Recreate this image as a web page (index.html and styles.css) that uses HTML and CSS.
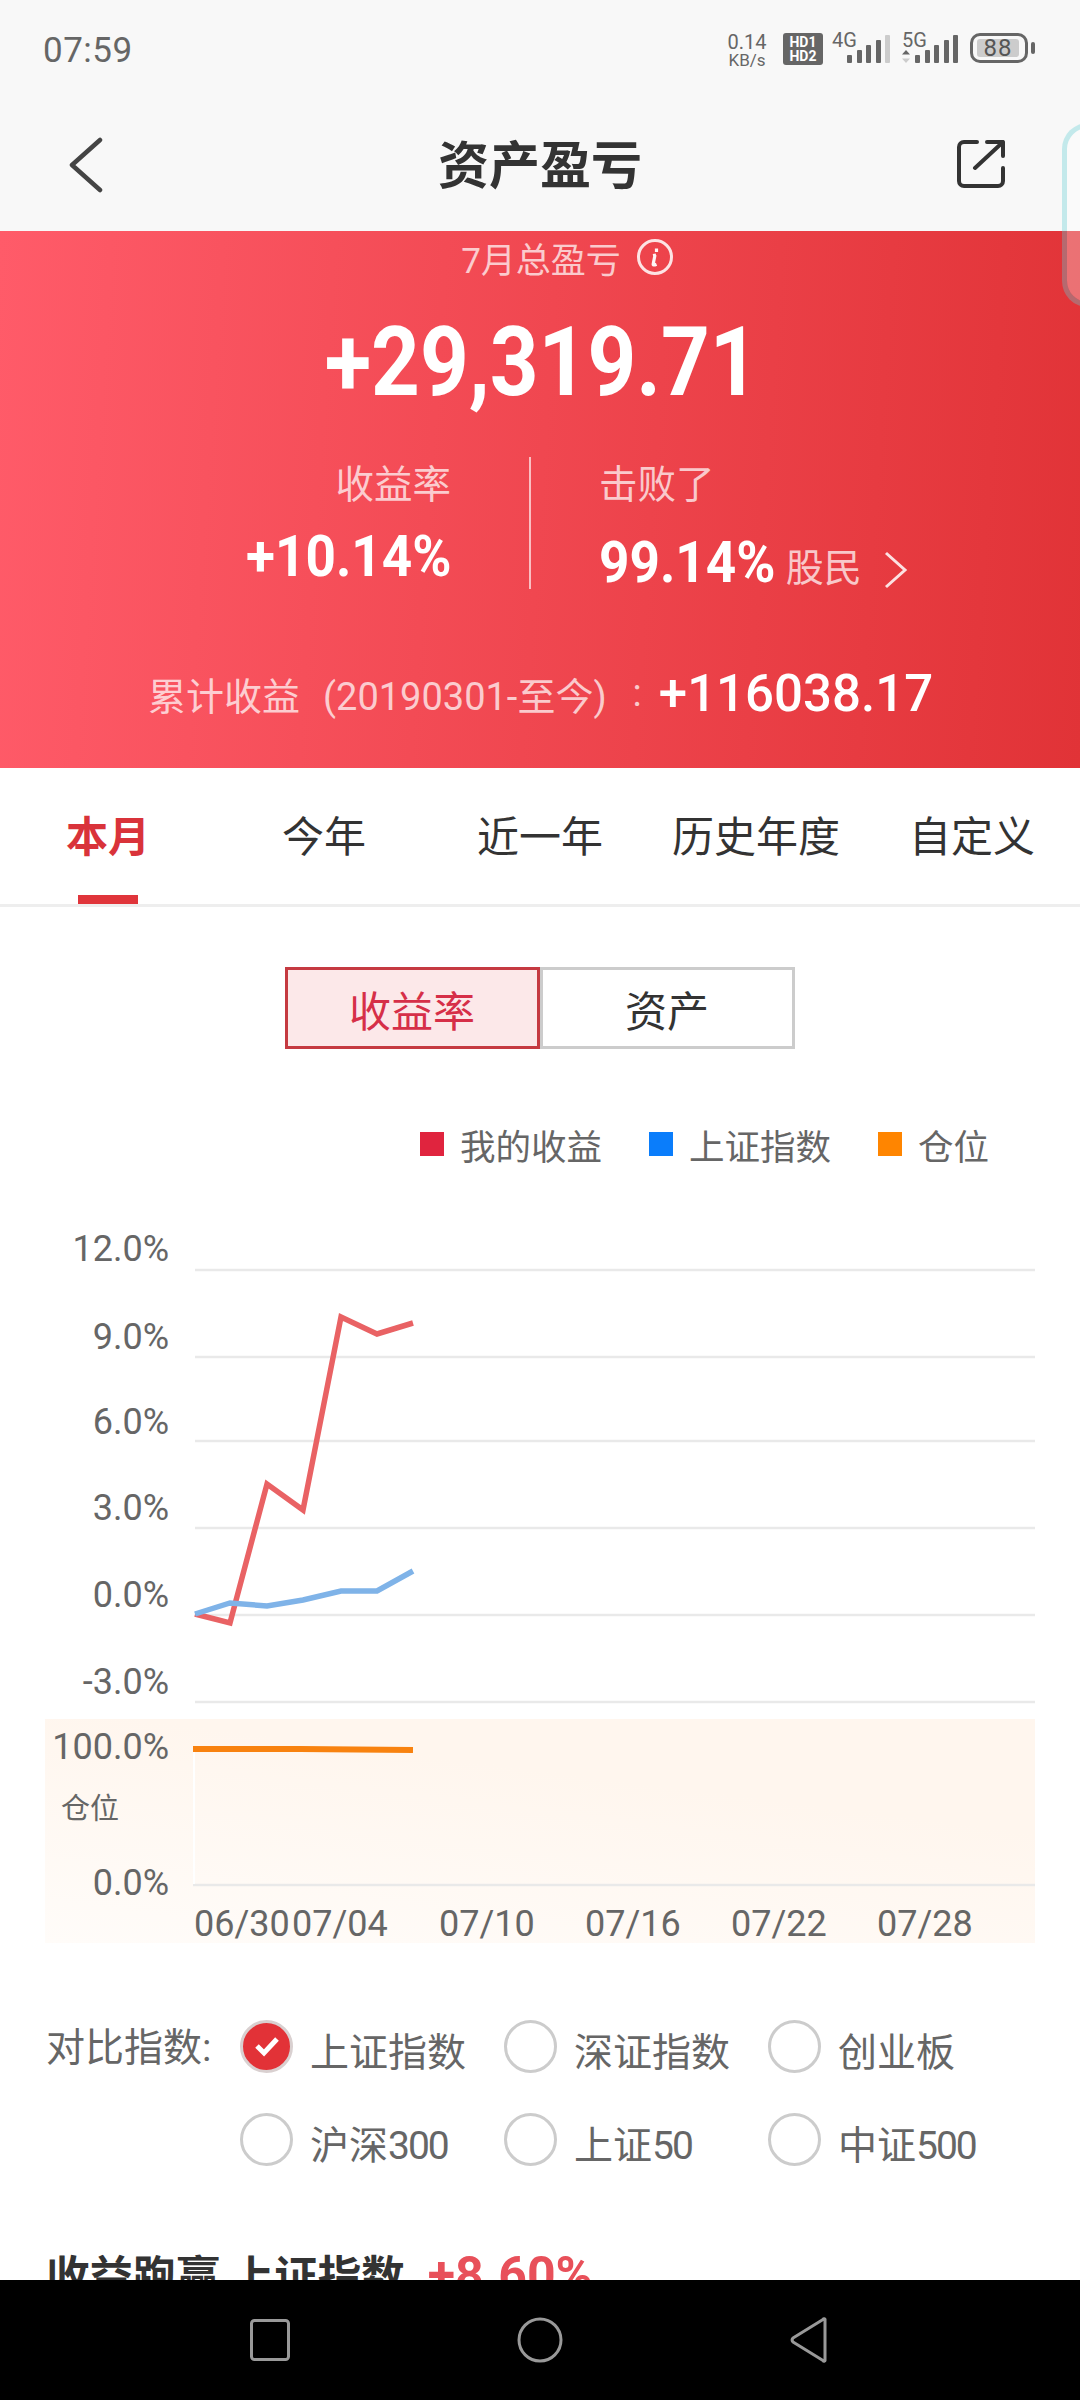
FILE: index.html
```html
<!DOCTYPE html>
<html lang="zh-CN">
<head>
    <meta charset="UTF-8">
    <meta name="viewport" content="width=device-width, initial-scale=1.0">
    <title>资产盈亏</title>
    <link rel="stylesheet" href="styles.css">
</head>
<body>
<div class="screen">
    <div class="float-tab"></div>

    <div class="topbar">
        <div class="status">
            <span class="time">07:59</span>
            <div class="status-icons">
                <div class="speed"><span class="speed-num">0.14</span><span>KB/s</span></div>
                <div class="hd"><span>HD1</span><span>HD2</span></div>
                <div class="net net-4g">
                    <span class="net-label">4G</span>
                    <div class="bars">
                        <i class="b1"></i><i class="b2"></i><i class="b3"></i><i class="b4"></i><i class="b5 off"></i>
                    </div>
                </div>
                <div class="net net-5g">
                    <span class="net-label">5G</span>
                    <svg class="updown" width="8" height="13" viewBox="0 0 8 13"><path d="M4 0l4 4.500H0z" fill="#666"/><path d="M4 13l4-4.500H0z" fill="#ccc"/></svg>
                    <div class="bars">
                        <i class="b1"></i><i class="b2"></i><i class="b3"></i><i class="b4"></i><i class="b5"></i>
                    </div>
                </div>
                <div class="battery">
                    <div class="battery-body"><span>88</span></div>
                    <div class="battery-cap"></div>
                </div>
            </div>
        </div>
        <div class="nav">
            <svg class="back" width="34" height="56" viewBox="0 0 34 56"><path d="M31 3L3 28l28 25" fill="none" stroke="#444" stroke-width="4.500" stroke-linecap="round" stroke-linejoin="round"/></svg>
            <h1>资产盈亏</h1>
            <svg class="share" width="48" height="48" viewBox="0 0 48 48"><path d="M20 2H7a5 5 0 0 0-5 5v34a5 5 0 0 0 5 5h34a5 5 0 0 0 5-5V28M18 28L46 2M30 2h16v14" fill="none" stroke="#333" stroke-width="4" stroke-linecap="round" stroke-linejoin="round"/></svg>
        </div>
    </div>

    <div class="hero">
        <div class="hero-title">
            <span>7月总盈亏</span>
            <svg width="36" height="36" viewBox="0 0 36 36"><circle cx="18" cy="18" r="16.500" fill="none" stroke="#fff" stroke-opacity=".85" stroke-width="3"/><path d="M19.500 9.500v3.500M19 16l-3 .500M18 16l-1.800 9c-.2 1 .6 1.500 3.300.3" fill="none" stroke="#fff" stroke-opacity=".95" stroke-width="3.200"/></svg>
        </div>
        <div class="hero-total"><span>+29,319.71</span></div>
        <div class="hero-split">
            <div class="hero-col left">
                <div class="hero-label">收益率</div>
                <div class="hero-value"><span class="num">+10.14%</span></div>
            </div>
            <div class="hero-col right">
                <div class="hero-label">击败了</div>
                <div class="hero-value"><span class="num">99.14%</span><span class="unit">股民</span>
                    <svg class="more" width="24" height="38" viewBox="0 0 24 38"><path d="M2 2l19 17L2 36" fill="none" stroke="#fff" stroke-opacity=".85" stroke-width="3"/></svg>
                </div>
            </div>
        </div>
        <div class="hero-sum">
            <span class="sum-label">累计收益</span>
            <span class="sum-label sum-range">(20190301-至今)</span>
            <span class="sum-label sum-colon">:</span>
            <span class="sum-value">+116038.17</span>
        </div>
    </div>

    <div class="tabs">
        <div class="tab active">本月</div>
        <div class="tab">今年</div>
        <div class="tab">近一年</div>
        <div class="tab">历史年度</div>
        <div class="tab">自定义</div>
    </div>

    <div class="content">
        <div class="toggle">
            <div class="toggle-item on">收益率</div>
            <div class="toggle-item">资产</div>
        </div>

        <div class="legend">
            <div class="legend-item"><i class="sq red"></i>我的收益</div>
            <div class="legend-item"><i class="sq blue"></i>上证指数</div>
            <div class="legend-item"><i class="sq orange"></i>仓位</div>
        </div>

        <svg class="chart" width="1080" height="730" viewBox="0 1220 1080 730">
            <defs>
                <linearGradient id="posfade" x1="0" y1="1" x2="0.45" y2="0.2">
                    <stop offset="0" stop-color="#fffcf9"/>
                    <stop offset="1" stop-color="#fff6ee"/>
                </linearGradient>
            </defs>
            <rect x="45" y="1719" width="990" height="224" fill="url(#posfade)"/>
            <g class="grid">
                <line x1="195" y1="1270" x2="1035" y2="1270"/>
                <line x1="195" y1="1357" x2="1035" y2="1357"/>
                <line x1="195" y1="1441" x2="1035" y2="1441"/>
                <line x1="195" y1="1528" x2="1035" y2="1528"/>
                <line x1="195" y1="1615" x2="1035" y2="1615"/>
                <line x1="195" y1="1702" x2="1035" y2="1702"/>
                <line x1="193" y1="1885" x2="1035" y2="1885"/>
            </g>
            <line x1="194" y1="1752" x2="194" y2="1884" stroke="#fff" stroke-width="2"/>
            <g class="axis">
                <text x="169" y="1261">12.0%</text>
                <text x="169" y="1349">9.0%</text>
                <text x="169" y="1434">6.0%</text>
                <text x="169" y="1520">3.0%</text>
                <text x="169" y="1607">0.0%</text>
                <text x="169" y="1694">-3.0%</text>
                <text x="169" y="1759">100.0%</text>
                <text x="169" y="1895">0.0%</text>
            </g>
            <text class="pos-name" x="61" y="1819">仓位</text>
            <g class="dates">
                <text x="194" y="1936">06/30</text>
                <text x="292" y="1936">07/04</text>
                <text x="439" y="1936">07/10</text>
                <text x="585" y="1936">07/16</text>
                <text x="731" y="1936">07/22</text>
                <text x="877" y="1936">07/28</text>
            </g>
            <polyline class="line l-red" points="195,1614 230,1623 267,1484 303,1510 341,1317 377,1334 413,1323"/>
            <polyline class="line l-blue" points="195,1614 230,1603 267,1606 303,1600 341,1591 377,1591 413,1571"/>
            <polyline class="line l-orange" points="193,1749 300,1749 413,1750"/>
        </svg>

        <div class="compare">
            <div class="compare-label">对比指数:</div>
            <div class="options">
                <div class="option"><span class="radio checked"><svg width="26" height="22" viewBox="0 0 26 22"><path d="M3 11l7 7L23 4" fill="none" stroke="#fff" stroke-width="5"/></svg></span><span class="opt-text">上证指数</span></div>
                <div class="option"><span class="radio"></span><span class="opt-text">深证指数</span></div>
                <div class="option"><span class="radio"></span><span class="opt-text">创业板</span></div>
                <div class="option"><span class="radio"></span><span class="opt-text">沪深<span class="digits">300</span></span></div>
                <div class="option"><span class="radio"></span><span class="opt-text">上证<span class="digits">50</span></span></div>
                <div class="option"><span class="radio"></span><span class="opt-text">中证<span class="digits">500</span></span></div>
            </div>
        </div>

        <div class="beat"><b>收益跑赢 上证指数</b><span class="beat-num">+8.60%</span></div>
    </div>

    <div class="softkeys">
        <svg width="40" height="42" viewBox="0 0 40 42"><rect x="1.500" y="1.500" width="37" height="39" rx="3" fill="none" stroke="#999" stroke-width="3"/></svg>
        <svg width="46" height="46" viewBox="0 0 46 46"><circle cx="23" cy="23" r="21" fill="none" stroke="#999" stroke-width="3"/></svg>
        <svg width="38" height="46" viewBox="0 0 38 46"><path d="M35 3v40a1 1 0 0 1-2 .5L3 25a3 3 0 0 1 0-4L33 2.500a1 1 0 0 1 2 .5z" fill="none" stroke="#999" stroke-width="3" stroke-linejoin="round"/></svg>
    </div>
</div>
</body>
</html>
```

FILE: styles.css
```css
* {
    box-sizing: border-box;
}

body {
    margin: 0;
    padding: 0;
    background: #fff;
    font-family: Roboto, "Noto Sans CJK SC", sans-serif;
    color: #333;
}

.screen {
    position: relative;
    width: 1080px;
    height: 2400px;
    overflow: hidden;
    display: flex;
    flex-direction: column;
}

/* floating side handle that sits over the header */
.float-tab {
    position: absolute;
    left: 1062px;
    top: 123px;
    width: 40px;
    height: 184px;
    border: 5px solid rgba(97, 206, 211, 0.35);
    border-radius: 26px 0 0 26px;
    background: rgba(255, 255, 255, 0.3);
    background-clip: padding-box;
    z-index: 5;
}

.topbar {
    height: 231px;
    background: #f8f8f8;
    flex: none;
}

.status {
    height: 100px;
    padding: 0 45px 0 43px;
    display: flex;
    align-items: center;
    justify-content: space-between;
    color: #666;
}

.time {
    font-size: 35px;
    letter-spacing: 0.5px;
}

.status-icons {
    display: flex;
    align-items: flex-start;
    height: 32px;
    margin-top: -2px;
}

.speed {
    display: flex;
    flex-direction: column;
    align-items: center;
    font-size: 17px;
    line-height: 18px;
    width: 40px;
    margin-right: 16px;
}

.speed-num {
    font-size: 20px;
}

.hd {
    width: 40px;
    height: 32px;
    background: #666;
    color: #fff;
    border-radius: 3px;
    font-size: 14px;
    font-weight: 700;
    line-height: 14px;
    display: flex;
    flex-direction: column;
    align-items: center;
    justify-content: center;
    margin-right: 9px;
}

.net {
    position: relative;
    height: 30px;
    margin-right: 12px;
}

.net-4g {
    width: 58px;
}

.net-5g {
    width: 56px;
}

.net-label {
    position: absolute;
    left: 0;
    top: -3px;
    font-size: 20px;
    line-height: 20px;
}

.updown {
    position: absolute;
    left: 0;
    bottom: 0;
}

.bars {
    position: absolute;
    right: 0;
    bottom: 0;
    display: flex;
    align-items: flex-end;
    gap: 4.500px;
}

.bars i {
    display: block;
    width: 5px;
    background: #666;
    border-radius: 1px;
}

.bars .b1 { height: 8px; }
.bars .b2 { height: 13px; }
.bars .b3 { height: 18px; }
.bars .b4 { height: 23px; }
.bars .b5 { height: 28px; }
.bars .off { background: #ccc; }

.battery {
    display: flex;
    align-items: center;
    height: 30px;
}

.battery-body {
    width: 58px;
    height: 30px;
    border: 3px solid #666;
    border-radius: 10px;
    padding: 3px 4px;
}

.battery-body span {
    display: block;
    width: 42px;
    height: 18px;
    background: #ccc;
    border-radius: 3px;
    font-size: 24px;
    line-height: 18px;
    text-align: center;
    color: #555;
    letter-spacing: 1px;
}

.battery-cap {
    width: 4px;
    height: 12px;
    margin-left: 3px;
    background: #666;
    border-radius: 2px;
}

.nav {
    height: 131px;
    padding: 3px 75px 0 75px;
    display: grid;
    grid-template-columns: 1fr auto 1fr;
    align-items: center;
}

.nav h1 {
    margin: 0;
    font-size: 51px;
    line-height: 68px;
    font-weight: 700;
    color: #333;
}

.back {
    margin-left: -6px;
    margin-top: -4px;
}

.share {
    justify-self: end;
    margin-top: -6px;
}

.hero {
    height: 537px;
    flex: none;
    background: linear-gradient(94deg, #ff5b69 0%, #e13337 100%);
    color: #fff;
    position: relative;
}

.hero-title {
    height: 52px;
    padding-left: 54px;
    display: flex;
    align-items: center;
    justify-content: center;
    gap: 16px;
    font-size: 35px;
    color: rgba(255, 255, 255, 0.72);
}

.hero-total {
    text-align: center;
    font-size: 96px;
    line-height: 112px;
    font-weight: 700;
    margin-top: 23px;
    padding-left: 3px;
}

/* no condensed font here, so the figures are squeezed */
.hero-total span {
    display: inline-block;
    transform: scaleX(0.887);
}

.hero-split {
    display: flex;
    height: 132px;
    margin-top: 39px;
}

.hero-col {
    display: flex;
    flex-direction: column;
}

.hero-col.left {
    width: 531px;
    align-items: flex-end;
    padding-right: 78px;
    border-right: 2px solid rgba(255, 255, 255, 0.65);
}

.hero-col.right {
    padding-left: 68px;
}

.hero-label {
    font-size: 38.500px;
    line-height: 56px;
    color: rgba(255, 255, 255, 0.72);
}

.hero-value {
    font-size: 58px;
    line-height: 66px;
    font-weight: 700;
    margin-top: 10px;
    display: flex;
    align-items: center;
}

.num {
    display: inline-block;
    transform: scaleX(0.915);
}

.left .num {
    transform-origin: right center;
}

.right .num {
    transform-origin: left center;
    margin-right: -16px;
}

.unit {
    font-size: 38px;
    font-weight: 400;
    color: rgba(255, 255, 255, 0.72);
    margin-left: 10px;
    padding-top: 12px;
}

.more {
    margin-left: 22px;
    margin-top: 16px;
}

.hero-sum {
    margin-top: 74px;
    padding-left: 148px;
    display: flex;
    align-items: center;
    height: 60px;
}

.sum-label {
    font-size: 38px;
    color: rgba(255, 255, 255, 0.72);
}

.sum-range {
    margin-left: 23px;
}

.sum-colon {
    margin-left: 26px;
}

.sum-value {
    font-size: 51px;
    font-weight: 500;
    margin-left: 17px;
}

.tabs {
    height: 139px;
    flex: none;
    display: flex;
    border-bottom: 3px solid #eee;
}

.tab {
    width: 216px;
    text-align: center;
    font-size: 42px;
    line-height: 140px;
    position: relative;
    color: #333;
}

.tab.active {
    font-weight: 700;
    color: #d9333a;
}

.tab.active::after {
    content: "";
    position: absolute;
    left: 78px;
    bottom: 0;
    width: 60px;
    height: 9px;
    background: #e0353b;
}

.content {
    flex: 1;
    overflow: hidden;
    min-height: 0;
}

.toggle {
    display: flex;
    justify-content: center;
    margin-top: 60px;
    padding-right: 1px;
}

.toggle-item {
    width: 255px;
    height: 82px;
    border: 3px solid #ccc;
    text-align: center;
    font-size: 42px;
    line-height: 86px;
    color: #333;
}

.toggle-item.on {
    background: #fce8e9;
    border-color: #c53a41;
    color: #d62f48;
}

.legend {
    display: flex;
    justify-content: flex-end;
    gap: 47px;
    padding-right: 91px;
    margin-top: 65px;
    height: 60px;
}

.legend-item {
    display: flex;
    align-items: center;
    gap: 16px;
    font-size: 35.500px;
    color: #666;
    height: 60px;
}

.sq {
    display: block;
    width: 24px;
    height: 24px;
}

.sq.red { background: #e0243e; }
.sq.blue { background: #0a7dfb; }
.sq.orange { background: #ff8500; }

.chart {
    display: block;
    margin-top: 46px;
}

.grid line {
    stroke: #e9e9e9;
    stroke-width: 2.700;
}

.axis text {
    font-size: 36px;
    fill: #666;
    text-anchor: end;
}

.dates text {
    font-size: 36px;
    fill: #666;
}

.pos-name {
    font-size: 29px;
    fill: #666;
}

.line {
    fill: none;
    stroke-width: 5.500;
}

.l-red { stroke: #e96264; }
.l-blue { stroke: #7fb3e8; }
.l-orange { stroke: #f8820f; stroke-width: 6; }

.compare {
    display: flex;
    padding-left: 46px;
    margin-top: 69px;
}

.compare-label {
    width: 194px;
    font-size: 39px;
    line-height: 54px;
    padding-top: 2px;
    color: #666;
}

.options {
    display: grid;
    grid-template-columns: 264px 264px 264px;
    row-gap: 39px;
}

.option {
    display: flex;
    align-items: center;
    gap: 17px;
    height: 54px;
    font-size: 39px;
    color: #666;
}

.opt-text {
    padding-top: 5px;
}

.digits {
    letter-spacing: -2px;
}

.radio {
    width: 53px;
    height: 53px;
    border: 3px solid #ccc;
    border-radius: 50%;
    display: flex;
    align-items: center;
    justify-content: center;
    flex: none;
}

.radio.checked {
    background: #e23237;
    border-color: #d9d0d0;
}

.beat {
    margin-top: 79px;
    padding-left: 46px;
    font-size: 43.500px;
    line-height: 60px;
    color: #333;
    white-space: nowrap;
}

.beat-num {
    margin-left: 23px;
    color: #e8505a;
    font-weight: 700;
    font-size: 50px;
}

.softkeys {
    height: 120px;
    flex: none;
    background: #000;
    position: relative;
    display: flex;
    align-items: center;
    justify-content: space-between;
    padding: 0 252px 0 250px;
}
```
